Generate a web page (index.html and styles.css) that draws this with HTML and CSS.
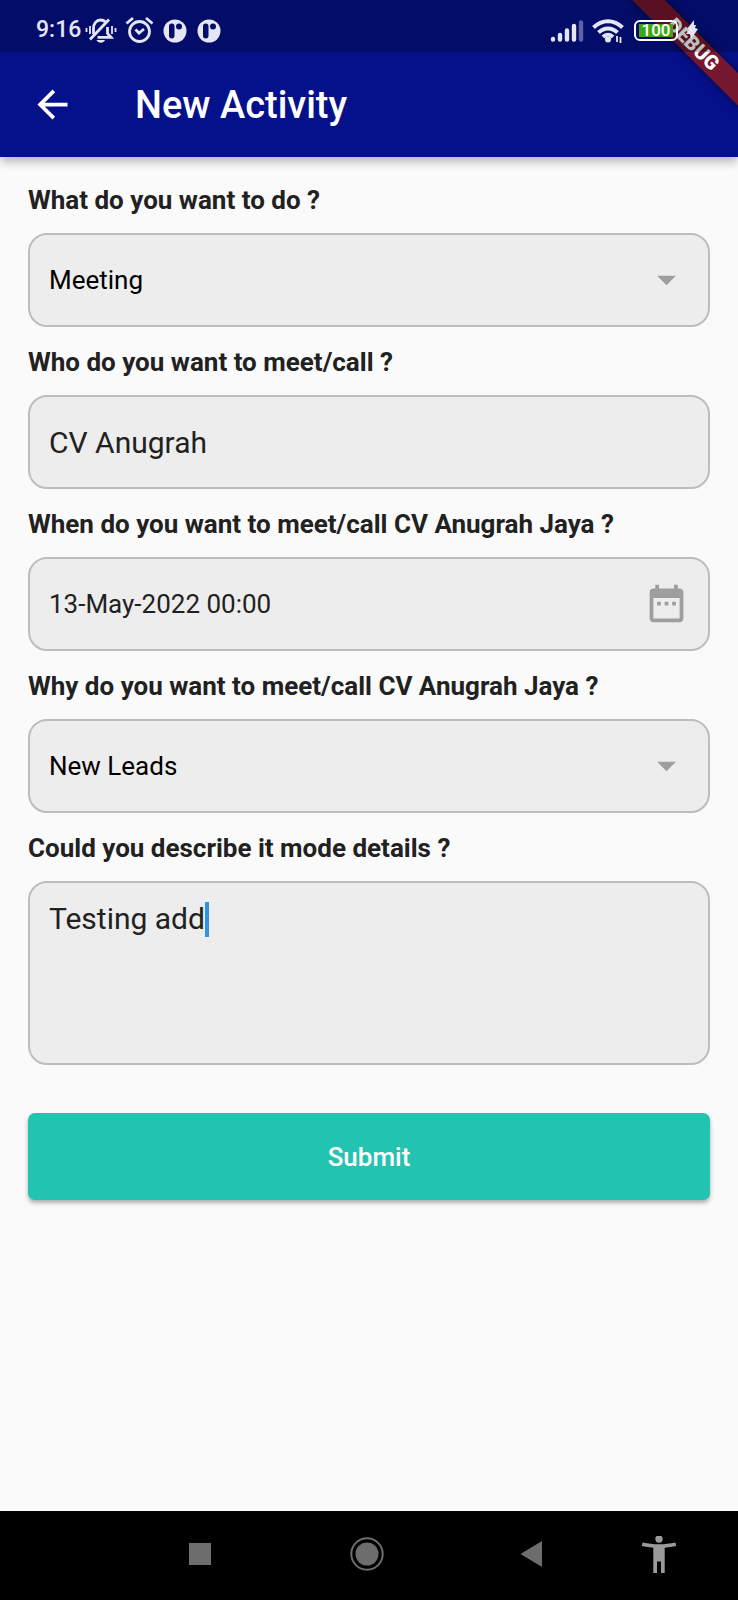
FILE: index.html
```html
<!DOCTYPE html>
<html lang="en">
<head>
<meta charset="utf-8">
<meta name="viewport" content="width=device-width, initial-scale=1">
<title>New Activity</title>
<link rel="stylesheet" href="styles.css">
</head>
<body>
<div class="screen">
  <header class="header">
    <div class="status">
      <div class="status-group">
        <div class="clock">
          <span>9:16</span>
          <svg width="32" height="28" viewBox="0 0 32 28" fill="none" stroke="currentColor" stroke-width="2.800">
            <path d="M8.500 18v-5.500C8.500 7.500 11.500 4 15.500 4c2.500 0 4 1 5 2M22.500 11v6.500l3.500 3.800H12.500"/>
            <path d="M5 23.500 24 3.500"/>
            <path d="M5 10v8M1.500 12v4M27 10v8M30.500 12v4" stroke-width="1.800"/>
            <path d="M11.500 24h8.500c-1.500 3.600-7 3.600-8.500 0z" fill="currentColor" stroke="none"/>
          </svg>
        </div>
        <svg width="30" height="28" viewBox="0 0 30 28" fill="none" stroke="currentColor" stroke-width="2.800">
          <circle cx="14.500" cy="15.500" r="10"/>
          <path d="M1.500 7.500 8 2M27.500 7.500 21 2"/>
          <path d="M10.500 13.500 14 17 19 13"/>
        </svg>
        <svg width="26" height="28" viewBox="0 0 26 28">
          <circle cx="12" cy="15" r="11.500" fill="currentColor"/>
          <rect x="6" y="7.500" width="5.500" height="15" rx="2.700" fill="#040e66"/>
          <circle cx="16" cy="10.500" r="3" fill="#040e66"/>
        </svg>
        <svg width="26" height="28" viewBox="0 0 26 28">
          <circle cx="12" cy="15" r="11.500" fill="currentColor"/>
          <rect x="6" y="7.500" width="5.500" height="15" rx="2.700" fill="#040e66"/>
          <circle cx="16" cy="10.500" r="3" fill="#040e66"/>
        </svg>
      </div>
      <div class="status-group">
        <svg width="34" height="28" viewBox="0 0 34 28" fill="none" stroke="currentColor" stroke-width="4.400" stroke-linecap="round">
          <path d="M3 23.500v-.5M10 23.500V19M17 23.500V14.500M24 23.500V10"/>
          <path d="M31 23.500V6.500" opacity=".4"/>
        </svg>
        <svg width="34" height="28" viewBox="0 0 34 28" fill="none" stroke="currentColor" stroke-width="4">
          <path d="M1.500 11.500C10 3 22 3 30.500 11.500M6.500 16.500c5.500-5.500 13.500-5.500 19 0M11 21c3-3 7-3 10 0"/>
          <circle cx="16" cy="23.500" r="3" fill="currentColor" stroke="none"/>
          <path d="M25 20v6M28.500 21v6" stroke-width="1.800"/>
        </svg>
        <span class="battery"><span class="level">100</span></span>
        <svg width="13" height="28" viewBox="0 0 13 28" fill="currentColor"><path d="M8 4 1 13l2 1-3 4h4l1 5 7-10-3-1 1-3H8z"/></svg>
      </div>
    </div>
    <div class="appbar">
      <button class="icon-button" type="button" aria-label="Back">
        <svg width="45" height="45" viewBox="0 0 24 24" fill="currentColor"><path d="M20 11H7.830l5.590-5.590L12 4l-8 8 8 8 1.410-1.410L7.830 13H20v-2z"/></svg>
      </button>
      <h1 class="title">New Activity</h1>
    </div>
    <div class="ribbon-corner"><div class="ribbon">DEBUG</div></div>
  </header>

  <main class="content">
    <form class="form">
      <label class="label" for="what">What do you want to do ?</label>
      <div class="control">
        <select class="field" id="what"><option>Meeting</option></select>
        <svg class="arrow" width="45" height="45" viewBox="0 0 24 24" fill="#9e9e9e"><path d="M7 10l5 5 5-5z"/></svg>
      </div>

      <label class="label" for="who">Who do you want to meet/call ?</label>
      <div class="control">
        <input class="field large" id="who" type="text" value="CV Anugrah">
      </div>

      <label class="label" for="when">When do you want to meet/call CV Anugrah Jaya ?</label>
      <div class="control">
        <input class="field" id="when" type="text" value="13-May-2022 00:00">
        <svg class="arrow" width="45" height="45" viewBox="0 0 24 24" fill="#9e9e9e"><path d="M9 11H7v2h2v-2zm4 0h-2v2h2v-2zm4 0h-2v2h2v-2zm2-7h-1V2h-2v2H8V2H6v2H5c-1.110 0-1.990.9-1.990 2L3 20c0 1.100.89 2 2 2h14c1.100 0 2-.9 2-2V6c0-1.100-.9-2-2-2zm0 16H5V9h14v11z"/></svg>
      </div>

      <label class="label" for="why">Why do you want to meet/call CV Anugrah Jaya ?</label>
      <div class="control">
        <select class="field" id="why"><option>New Leads</option></select>
        <svg class="arrow" width="45" height="45" viewBox="0 0 24 24" fill="#9e9e9e"><path d="M7 10l5 5 5-5z"/></svg>
      </div>

      <label class="label" for="details">Could you describe it mode details ?</label>
      <div class="control">
        <textarea class="field large area" id="details">Testing add</textarea>
        <span class="caret"></span>
      </div>

      <button class="submit" type="submit">Submit</button>
    </form>
  </main>

  <nav class="navbar">
    <button class="nav-button" type="button" aria-label="Recent apps">
      <svg width="40" height="40" viewBox="0 0 40 40" fill="#6d6d6d"><rect x="9" y="7" width="22" height="22"/></svg>
    </button>
    <button class="nav-button" type="button" aria-label="Home">
      <svg width="40" height="40" viewBox="0 0 40 40"><circle cx="21" cy="18" r="15.700" fill="none" stroke="#6d6d6d" stroke-width="2"/><circle cx="21" cy="18" r="11.500" fill="#6d6d6d"/></svg>
    </button>
    <button class="nav-button" type="button" aria-label="Back">
      <svg width="40" height="40" viewBox="0 0 40 40" fill="#6d6d6d"><path d="M8.500 18 30 5v26z"/></svg>
    </button>
    <button class="nav-button" type="button" aria-label="Accessibility">
      <svg width="40" height="40" viewBox="0 -1 40 40" fill="#9a9a9a"><circle cx="20" cy="2" r="3.700"/><path d="M3.500 5.500c11 2.400 22 2.400 33 0l.7 3.600c-3.700.9-7.600 1.400-11.500 1.600V36h-3.700V24.500h-4V36h-3.700V10.700c-3.800-.2-7.700-.7-11.500-1.600z"/></svg>
    </button>
  </nav>
</div>
</body>
</html>
```
FILE: styles.css
```css
* {
  box-sizing: border-box;
}

body {
  margin: 0;
  background: #fafafa;
  color: #212121;
  font-family: Roboto, "Noto Sans", sans-serif;
  font-size: 26px;
  line-height: 30px;
}

svg {
  display: block;
  flex: none;
}

button {
  border: 0;
  padding: 0;
  font: inherit;
}

.screen {
  display: flex;
  flex-direction: column;
  min-height: 100vh;
}

.header {
  position: relative;
  background: #05118b;
  color: #fff;
  box-shadow: 0 4px 10px rgba(0, 0, 0, .3);
}

.status {
  position: relative;
  z-index: 2;
  display: flex;
  justify-content: space-between;
  height: 52px;
  padding: 16px 39px 8px 36px;
  background: rgba(0, 0, 0, .25);
  color: #e4e5f5;
}

.status-group {
  display: flex;
  align-items: center;
  gap: 8px;
}

.clock {
  display: flex;
  align-items: center;
  gap: 4px;
  font-size: 23px;
  font-weight: 500;
  line-height: 28px;
}

.battery {
  display: block;
  width: 44px;
  height: 21px;
  padding: 2px 3px;
  border: 2px solid #fff;
  border-radius: 6px;
}

.level {
  display: block;
  height: 13px;
  background: #3fa51c;
  color: #fff;
  font-size: 17px;
  font-weight: 500;
  line-height: 13px;
  text-align: center;
}

.appbar {
  display: flex;
  align-items: center;
  gap: 60px;
  height: 105px;
  padding: 0 30px;
}

.icon-button {
  background: none;
  color: inherit;
}

.title {
  margin: 0;
  font-size: 38px;
  font-weight: 500;
  line-height: 44px;
}

.ribbon-corner {
  position: absolute;
  z-index: 1;
  top: 0;
  right: 0;
  width: 140px;
  height: 140px;
  overflow: hidden;
  pointer-events: none;
}

.ribbon {
  position: absolute;
  top: 33px;
  left: 15px;
  width: 160px;
  height: 23px;
  background: #74172f;
  box-shadow: 0 0 10px rgba(0, 0, 0, .5);
  font-size: 20px;
  font-weight: 900;
  line-height: 23px;
  text-align: center;
  transform: rotate(45deg);
}

.content {
  flex: 1;
  padding: 28px 28px 40px;
}

.form {
  display: flex;
  flex-direction: column;
}

.label {
  margin-bottom: 18px;
  font-weight: 700;
}

.control {
  position: relative;
  margin-bottom: 20px;
}

.field {
  display: block;
  width: 100%;
  height: 94px;
  margin: 0;
  padding: 0 19px;
  border: 2px solid #bdbdbd;
  border-radius: 19px;
  outline: 0;
  background: #ededed;
  color: #212121;
  font: inherit;
  appearance: none;
}

select.field {
  color: #000;
}

.large {
  font-size: 30px;
}

.area {
  height: 184px;
  padding-top: 18px;
  line-height: 36px;
  resize: none;
}

.arrow {
  position: absolute;
  top: 24px;
  right: 21px;
  pointer-events: none;
}

.caret {
  position: absolute;
  top: 21px;
  left: 177px;
  width: 4px;
  height: 35px;
  background: #2f93e8;
}

.submit {
  height: 87px;
  margin-top: 28px;
  border-radius: 7px;
  background: #22c3b0;
  box-shadow: 0 3px 4px rgba(0, 0, 0, .3);
  color: #fff;
  font-weight: 500;
}

.navbar {
  display: grid;
  grid-template-columns: 1fr 1fr 1fr 88px;
  align-items: center;
  height: 89px;
  padding: 0 35px 0 117px;
  background: #000;
}

.nav-button {
  display: flex;
  justify-content: center;
  background: none;
}
```
